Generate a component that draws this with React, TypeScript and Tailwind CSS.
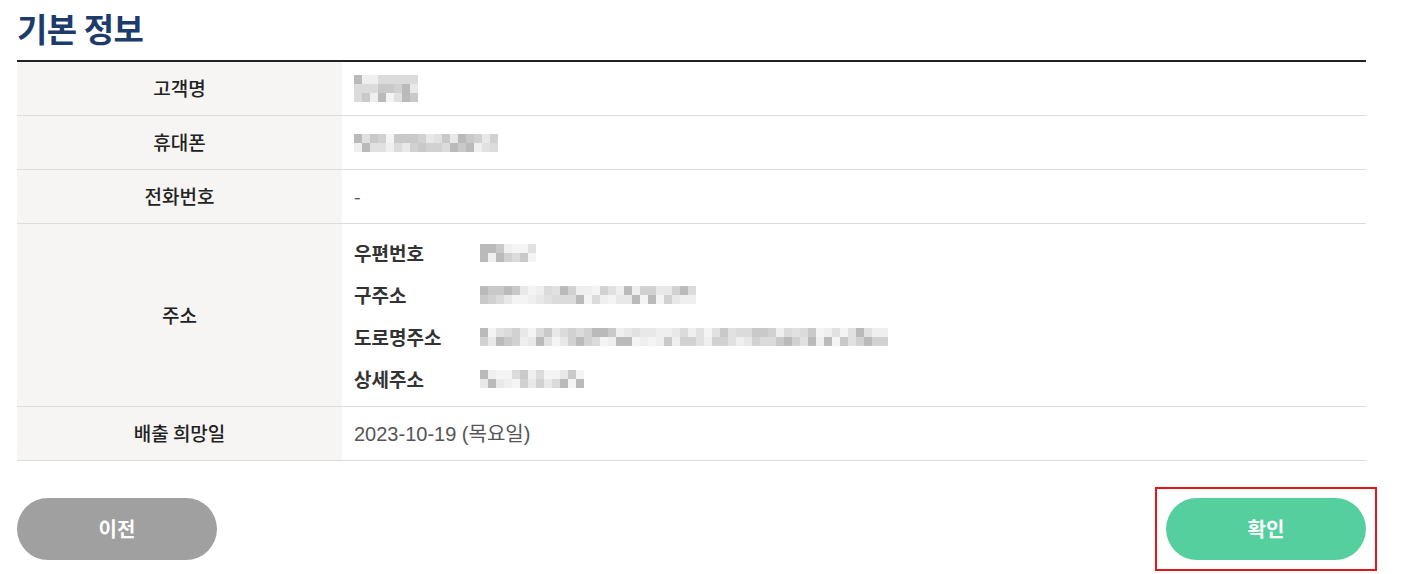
import React from "react";

const font = { fontFamily: '"Noto Sans CJK KR", "Liberation Sans", sans-serif' };

const shades = [
  "bg-[#e6e6e6]",
  "bg-[#d8d8d8]",
  "bg-[#cdcdcd]",
  "bg-[#eeeeee]",
  "bg-[#c4c4c4]",
  "bg-[#dedede]",
  "bg-[#f3f3f3]",
  "bg-[#b3b3b3]",
];

function Mosaic({ cells, seed = 1, rows = 2 }: { cells: number; seed?: number; rows?: number }) {
  const grid: string[][] = [];
  let s = seed * 7919 + 17;
  for (let r = 0; r < rows; r++) {
    const row: string[] = [];
    for (let i = 0; i < cells; i++) {
      s = (s * 1103515245 + 12345) % 2147483648;
      row.push(shades[Math.floor(s / 65536) % shades.length]);
    }
    grid.push(row);
  }
  return (
    <div className="flex flex-col opacity-90">
      {grid.map((row, r) => (
        <div className="flex" key={r}>
          {row.map((c, i) => (
            <span key={i} className={`block w-[8px] h-[9px] ${c}`} />
          ))}
        </div>
      ))}
    </div>
  );
}

function Row({
  label,
  children,
  tall,
}: {
  label: string;
  children: React.ReactNode;
  tall?: boolean;
}) {
  return (
    <div className="flex border-b border-[#dcdcdc]">
      <div
        className={`w-[325px] shrink-0 bg-[#f6f5f3] flex items-center justify-center text-[19px] font-medium text-[#222] ${
          tall ? "h-[182px]" : "h-[53px]"
        }`}
      >
        {label}
      </div>
      <div className="flex-1 flex items-center pl-[12px]">{children}</div>
    </div>
  );
}

function AddrLine({ label, cells, seed }: { label: string; cells: number; seed: number }) {
  return (
    <div className="flex items-center h-[42px]">
      <div className="w-[126px] text-[19px] font-bold text-[#333]">{label}</div>
      <Mosaic cells={cells} seed={seed} rows={2} />
    </div>
  );
}

export default function App() {
  return (
    <div className="w-[1407px] h-[574px] bg-white px-[17px] pt-[8px]" style={font}>
      <h1 className="text-[33px] font-bold text-[#1d3b6b] leading-[40px] tracking-[-0.5px]">
        기본 정보
      </h1>
      <div className="mt-[12px] w-[1349px] border-t-[2px] border-[#222]">
        <Row label="고객명">
          <Mosaic cells={8} seed={3} rows={3} />
        </Row>
        <Row label="휴대폰">
          <Mosaic cells={18} seed={7} />
        </Row>
        <Row label="전화번호">
          <span className="text-[19px] text-[#555]">-</span>
        </Row>
        <Row label="주소" tall>
          <div className="flex flex-col pt-[2px]">
            <AddrLine label="우편번호" cells={7} seed={11} />
            <AddrLine label="구주소" cells={27} seed={13} />
            <AddrLine label="도로명주소" cells={51} seed={17} />
            <AddrLine label="상세주소" cells={13} seed={19} />
          </div>
        </Row>
        <Row label="배출 희망일">
          <span
            className="text-[20px] text-[#555]"
            style={{ fontFamily: '"Liberation Sans", "Noto Sans CJK KR", sans-serif' }}
          >
            2023-10-19 (목요일)
          </span>
        </Row>
      </div>
      <div className="mt-[37px] flex justify-between items-center w-[1349px]">
        <button className="w-[200px] h-[62px] rounded-full bg-[#a0a0a0] text-white text-[20px] font-bold">
          이전
        </button>
        <div className="p-[9px] border-[2px] border-[#e5161b] -mr-[11px] -my-[11px]">
          <button className="w-[200px] h-[62px] rounded-full bg-[#55cf9e] text-white text-[20px] font-bold block">
            확인
          </button>
        </div>
      </div>
    </div>
  );
}
